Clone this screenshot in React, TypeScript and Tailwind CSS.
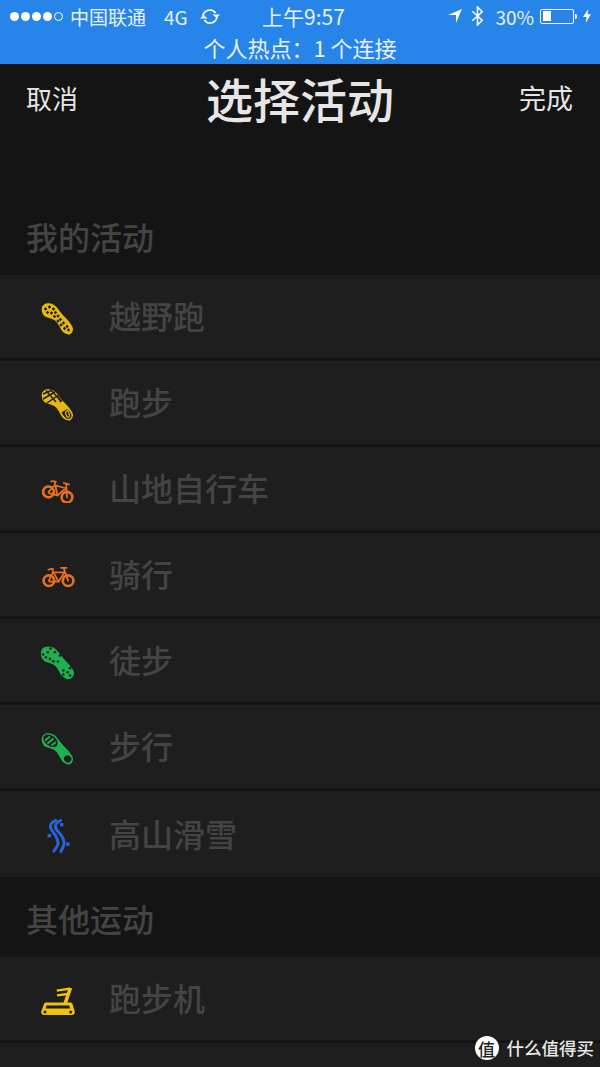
import React from 'react';

const FONT = '"Noto Sans CJK SC", "Liberation Sans", sans-serif';

const sole =
  'M1.7 7.8C2 4 5 2.2 8.3 2.2C12 2.2 15 4 16.7 6.2C19 9 21 12 23.3 14.5C26 17.5 30 21 31.7 24.5C33.5 27 33.5 30 31.5 32C30 33.8 28.3 33.8 26.5 33C24 32 23 31 21.7 29.5C19.5 26 18 21.5 15 19.5C12 17.5 8 17 5 15.5C2.8 14 1.5 11 1.7 7.8Z';

const Shoe: React.FC<{ children: React.ReactNode }> = ({ children }) => (
  <svg width="36" height="36" viewBox="0 0 36 36" fill="none">
    {children}
  </svg>
);

const TrailIcon = () => (
  <Shoe>
    <path d={sole} fill="#e6b70f" />
    {[[5.5, 8], [9.5, 6], [13.5, 8], [7.5, 11.5], [11.5, 12], [15.5, 11.5], [18, 15], [14.5, 15.5], [20.5, 18.5], [18, 20], [23.5, 22], [21, 24], [27, 25.5], [24.5, 27.5], [28.5, 29]].map(([x, y]) => (
      <path key={`${x}-${y}`} d={`M${x - 1.7} ${y}L${x} ${y - 1.7}L${x + 1.7} ${y}L${x} ${y + 1.7}Z`} fill="#1e1e1e" />
    ))}
  </Shoe>
);

const RunIcon = () => (
  <Shoe>
    <path d={sole} fill="#e6b70f" />
    <path d="M6 3.5L16 15M10.5 2.5L19.5 12.5M3 7L11 3.5M3 12L15 5M7 16L18 8.5" stroke="#1e1e1e" strokeWidth="1.5" />
    <path d="M17 7.5L22.5 14L20 15.5Z" fill="#1e1e1e" />
    <path d="M21.5 25.5L27 22C29.5 24 31.5 26.5 31.5 29C31 31.5 29 32.5 26.8 31.8C24.5 30.5 22.8 28 21.5 25.5Z" fill="#1e1e1e" />
    <ellipse cx="27.5" cy="27" rx="1.6" ry="3.4" transform="rotate(-15 27.5 27)" stroke="#e6b70f" strokeWidth="1.2" />
  </Shoe>
);

const BikeIcon: React.FC<{ tilted?: boolean }> = ({ tilted }) => (
  <svg width="33" height="24" viewBox="0 0 36 26" fill="none" stroke="#e8701f" strokeWidth="1.9">
    <g transform={tilted ? 'rotate(16 18 14)' : undefined}>
      <circle cx="7.5" cy="17" r="5.8" strokeWidth="2.9" />
      <circle cx="28.5" cy="17" r="5.8" strokeWidth="2.9" />
      <circle cx="7.5" cy="17" r="1" fill="#e8701f" stroke="none" />
      <circle cx="28.5" cy="17" r="1" fill="#e8701f" stroke="none" />
      <path d="M7.5 17L12 8H24.5L18 18H7.5M11 5L18 18M23.5 3L28.5 17M20 3H27.5M6.5 5.5C8 4 11 4 13 4.5" />
    </g>
  </svg>
);

const HikeIcon = () => (
  <Shoe>
    <path d={sole} fill="#1fb04f" stroke="#1fb04f" strokeWidth="1.6" />
    {[[7.7, 7.2], [15, 7.2], [20, 10.5], [10, 13.9], [13.3, 16.2], [6, 12.2], [23.3, 25.5], [30, 23.2], [27.7, 27.2], [30, 30.5], [23.3, 29.5], [10.5, 3.5], [3, 9.5], [18, 16.5]].map(([x, y]) => (
      <circle key={`${x}-${y}`} cx={x} cy={y} r="1.3" fill="#1e1e1e" />
    ))}
  </Shoe>
);

const WalkIcon = () => (
  <Shoe>
    <path d={sole} fill="#1fb04f" />
    <ellipse cx="10.5" cy="9.8" rx="8" ry="5.2" transform="rotate(35 10.5 9.8)" fill="#1e1e1e" />
    <path d="M5 9.5L10 5.5M7.5 12.5L13.5 7.5M11.5 14.5L16 11" stroke="#1fb04f" strokeWidth="2" />
    <ellipse cx="27.7" cy="27.9" rx="3.8" ry="3.4" transform="rotate(35 27.7 27.9)" fill="#1e1e1e" />
  </Shoe>
);

const SkiIcon = () => (
  <svg width="23" height="34" viewBox="0 0 23 34" fill="none" stroke="#2a62d8" strokeWidth="3" strokeLinecap="round">
    <path d="M8.5 1.5C4.5 3.5 3 6 3.5 8.5C4.5 12 8 15 9.5 18.5C10.5 21 11.5 22.5 11 25C10.5 27.5 8.5 29.5 7 32" />
    <path d="M13.5 1.5C9.5 3.5 8 6 8.5 8.5C9.5 12 14 15 15.5 18.5C16.8 21 17.5 22.5 17 25C16.5 27.5 15 30 14 32.5" />
    <rect x="13" y="4" width="3.4" height="3.4" fill="#2a62d8" stroke="none" />
    <rect x="0.6" y="15" width="3.4" height="3.4" fill="#2a62d8" stroke="none" />
    <rect x="19.2" y="23.5" width="3.4" height="3.4" fill="#2a62d8" stroke="none" />
  </svg>
);

const TreadmillIcon = () => (
  <svg width="34" height="29" viewBox="0 0 34 29" fill="none">
    <path d="M5 16.5H29.5C30.5 16.5 31 17 31.5 18L33.6 25C34.4 27.5 33 29 31 29H3C1 29 -0.4 27.5 0.4 25L3 18C3.5 17 4 16.5 5 16.5Z" fill="#f0c20f" />
    <path d="M5.5 19.4H28.2L29 22.6H4.6Z" fill="#1e1e1e" />
    <circle cx="4" cy="26" r="1.5" fill="#1e1e1e" />
    <circle cx="29.7" cy="26" r="1.5" fill="#1e1e1e" />
    <path d="M24 18L27.5 7.5L29.5 2" stroke="#f0c20f" strokeWidth="3.6" />
    <path d="M15.7 4.6L29 2.6M16 9.4L26.5 8" stroke="#f0c20f" strokeWidth="2.4" />
  </svg>
);

const rows1 = [
  { name: '越野跑', icon: <TrailIcon /> },
  { name: '跑步', icon: <RunIcon /> },
  { name: '山地自行车', icon: <BikeIcon tilted /> },
  { name: '骑行', icon: <BikeIcon /> },
  { name: '徒步', icon: <HikeIcon /> },
  { name: '步行', icon: <WalkIcon /> },
  { name: '高山滑雪', icon: <SkiIcon /> },
];

const Row: React.FC<{ name: string; icon: React.ReactNode; divider?: boolean }> = ({ name, icon, divider }) => (
  <div className={`flex h-[86px] items-center bg-[#1e1e1e] ${divider ? 'border-b-[3px] border-[#141414]' : ''}`}>
    <div className="flex w-[109px] shrink-0 pl-[40px] pt-[4px]">
      <div className="flex w-[36px] justify-center">{icon}</div>
    </div>
    <span className="pb-[3px] text-[32px] font-medium leading-none text-[#444444]">{name}</span>
  </div>
);

const App: React.FC = () => {
  return (
    <div className="relative h-[1067px] w-[600px] overflow-hidden bg-[#141414]" style={{ fontFamily: FONT }}>
      <header className="h-[64px] bg-[#2785ea]">
        <div className="flex h-[32px] items-center pl-[10px] pr-[9px] text-[19px] leading-none text-[#e8f2fd]">
          <div className="flex w-[252px] items-center">
            <div className="flex items-center gap-[2px]">
              {[0, 1, 2, 3].map((i) => (
                <span key={i} className="size-[9px] rounded-full bg-white" />
              ))}
              <span className="size-[9px] rounded-full border border-white" />
            </div>
            <span className="ml-[7px]">中国联通</span>
            <span className="ml-[18px]">4G</span>
            <svg className="ml-[12px]" width="20" height="17" viewBox="0 0 20 17" fill="none" stroke="white" strokeWidth="1.7">
              <path d="M3 8.5C3 5 6 2 10 2C12.5 2 14.5 3.2 15.5 5.2M17 8.5C17 12 14 15 10 15C7.5 15 5.5 13.8 4.5 11.8" />
              <path d="M12.5 6.5H20L16.5 10ZM0 10.5H7.5L3.5 7Z" fill="white" stroke="none" />
            </svg>
          </div>
          <span className="text-[21px]">上午9:57</span>
          <div className="ml-auto flex items-center">
            <svg width="14" height="14" viewBox="0 0 14 14" fill="white"><path d="M0 6L14 0L8 14V6Z" /></svg>
            <svg className="ml-[9px]" width="13" height="20" viewBox="0 0 12 19" fill="none" stroke="white" strokeWidth="1.5"><path d="M1 5L10.5 13.5L6 18V1L10.5 5.5L1 14" /></svg>
            <span className="ml-[11px]">30%</span>
            <div className="ml-[6px] flex h-[15px] w-[34px] items-center rounded-[2px] border border-white p-[1.5px]">
              <div className="h-full w-[8px] bg-white" />
            </div>
            <div className="ml-[1px] h-[5px] w-[2px] rounded-r-full bg-white" />
            <svg className="ml-[6px]" width="8" height="16" viewBox="0 0 9 16" fill="white"><path d="M6 0L0 9H4L3 16L9 6H5Z" /></svg>
          </div>
        </div>
        <div className="flex h-[32px] items-start justify-center pt-[1px] text-[22px] leading-[28px] text-[#e8f2fd]">个人热点：1 个连接</div>
      </header>

      <div className="flex h-[72px] items-center justify-between pb-[5px] pl-[26px] pr-[27px] text-[#e6e6e6]">
        <span className="text-[26px] leading-none">取消</span>
        <h1 className="pl-[3px] text-[47px] font-medium leading-none">选择活动</h1>
        <span className="text-[27px] leading-none">完成</span>
      </div>

      <div className="flex h-[139px] items-end pb-[23px] pl-[26px] text-[32px] font-medium leading-none text-[#444444]">我的活动</div>
      {rows1.map((r, i) => (
        <Row key={r.name} name={r.name} icon={r.icon} divider={i < rows1.length - 1} />
      ))}
      <div className="flex h-[80px] items-center pl-[26px] pt-[2px] text-[32px] font-medium leading-none text-[#444444]">其他运动</div>
      <Row name="跑步机" icon={<TreadmillIcon />} divider />
      <div className="h-[30px] bg-[#1e1e1e]" />

      <div className="absolute bottom-[7px] right-[6px] flex items-center gap-[8px]">
        <div className="flex size-[24px] items-center justify-center rounded-full bg-white text-[17px] font-medium leading-none text-[#222]">值</div>
        <span className="text-[17.5px] font-medium leading-none text-[#e8e8e8]">什么值得买</span>
      </div>
    </div>
  );
};

export default App;
